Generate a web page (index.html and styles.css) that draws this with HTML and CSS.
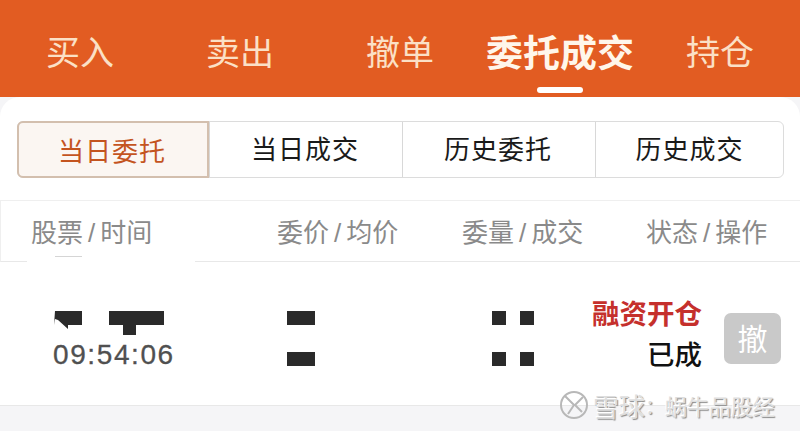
FILE: index.html
```html
<!DOCTYPE html>
<html lang="zh-CN">
<head>
    <meta charset="UTF-8">
    <meta name="viewport" content="width=device-width, initial-scale=1.0">
    <title>委托成交</title>
    <link rel="stylesheet" href="styles.css">
</head>
<body>
    <div class="page">
        <nav class="top-tabs">
            <div class="top-tab">买入</div>
            <div class="top-tab">卖出</div>
            <div class="top-tab">撤单</div>
            <div class="top-tab active">委托成交</div>
            <div class="top-tab">持仓</div>
        </nav>

        <div class="card">
            <div class="segments">
                <div class="segment active">当日委托</div>
                <div class="segment">当日成交</div>
                <div class="segment">历史委托</div>
                <div class="segment">历史成交</div>
            </div>

            <div class="table-head">
                <div class="col-name">股票<i>/</i>时间</div>
                <div class="col-price">委价<i>/</i>均价</div>
                <div class="col-qty">委量<i>/</i>成交</div>
                <div class="col-state">状态<i>/</i>操作</div>
            </div>

            <div class="order-row">
                <div class="col-name">
                    <div class="name-blocks">
                        <svg class="notched" width="28" height="18" viewBox="0 0 28 18">
                            <polygon points="1,0 28,0 28,14 14,14 14,18 4,9 1,8 0,14" fill="#2a2a2a"/>
                        </svg>
                        <span class="block wide"><b></b></span>
                    </div>
                    <div class="time">09:54:06</div>
                </div>
                <div class="col-price stack">
                    <span class="block"></span>
                    <span class="block"></span>
                </div>
                <div class="col-qty stack">
                    <div class="pair"><span class="block small"></span><span class="block small"></span></div>
                    <div class="pair"><span class="block small"></span><span class="block small"></span></div>
                </div>
                <div class="col-state">
                    <div class="order-type">融资开仓</div>
                    <div class="order-status">已成</div>
                </div>
                <button class="cancel-btn">撤</button>
            </div>
        </div>

        <div class="patch"><span></span></div>

        <div class="watermark">
            <svg width="30" height="30" viewBox="0 0 30 30" fill="none" stroke="#b8b8b8" stroke-width="2">
                <circle cx="15" cy="15" r="13"/>
                <path d="M6 6 L15 15 L9 24"/>
                <path d="M24 7 L16 15 L23 22"/>
            </svg>
            <span class="wm-brand">雪球</span><span class="wm-colon">：</span><span class="wm-name">蜗牛品股经</span>
        </div>
    </div>
</body>
</html>
```

FILE: styles.css
```css
body {
    margin: 0;
    background-color: #f5f5f7;
    font-family: "Noto Sans CJK SC", "Liberation Sans", sans-serif;
}
.page {
    position: relative;
    width: 800px;
    height: 431px;
    overflow: hidden;
}
.top-tabs {
    display: grid;
    grid-template-columns: repeat(5, 160px);
    height: 97px;
    background-color: #e25c22;
}
.top-tab {
    position: relative;
    text-align: center;
    font-size: 34px;
    line-height: 102px;
    color: #fbe0c6;
    white-space: nowrap;
}
.top-tab.active {
    font-size: 37px;
    font-weight: 700;
    color: #fff6ea;
}
.top-tab.active::after {
    content: "";
    position: absolute;
    left: 57px;
    top: 87px;
    width: 46px;
    height: 6px;
    border-radius: 3px;
    background-color: #fff;
}
.card {
    height: 309px;
    padding-top: 24px;
    box-sizing: border-box;
    background-color: #fff;
    border-radius: 20px 20px 0 0;
    border-bottom: 1px solid #e8e8e8;
}
.segments {
    display: grid;
    grid-template-columns: 191px 193px 193px 1fr;
    height: 57px;
    margin: 0 16px 0 17px;
    box-sizing: border-box;
    border: 1px solid #dcdcdc;
    border-radius: 6px;
}
.segment {
    padding-right: 2px;
    text-align: center;
    font-size: 26px;
    letter-spacing: 1px;
    line-height: 51px;
    color: #1a1a1a;
    border-left: 1px solid #d8d8d8;
}
.segment:first-child {
    border-left: none;
}
.segment:last-child {
    padding-right: 0;
}
.segment.active {
    margin: -1px 0 -1px -1px;
    line-height: 53px;
    color: #c4541f;
    background-color: #fbf6f2;
    border: 2px solid #d3bfae;
    border-radius: 6px 0 0 6px;
}
.table-head {
    display: flex;
    height: 62px;
    margin-top: 22px;
    padding-bottom: 2px;
    box-sizing: border-box;
    align-items: center;
    font-size: 26px;
    color: #8a8a8a;
    border-top: 1px solid #efefef;
    border-bottom: 1px solid #e8e8e8;
    border-left: 1px solid #efefef;
}
.table-head i {
    font-style: normal;
    font-family: "Liberation Sans", sans-serif;
    margin: 0 5px;
}
.table-head > div {
    white-space: nowrap;
}
.table-head .col-name {
    width: 276px;
    padding-left: 30px;
    box-sizing: border-box;
}
.table-head .col-price {
    width: 185px;
}
.table-head .col-qty {
    width: 184px;
}
.order-row {
    position: relative;
    display: flex;
    height: 143px;
    box-sizing: border-box;
    padding-top: 49px;
}
.block {
    display: block;
    position: relative;
    width: 28px;
    height: 14px;
    background-color: #2a2a2a;
}
.block.small {
    width: 14px;
}
.block.wide {
    width: 55px;
}
.block.wide b {
    position: absolute;
    left: 14px;
    top: 14px;
    width: 13px;
    height: 10px;
    background-color: #2a2a2a;
}
.order-row .col-name {
    width: 287px;
    padding-left: 52px;
    box-sizing: border-box;
}
.name-blocks {
    display: flex;
    gap: 27px;
    height: 14px;
    margin-left: 2px;
}
.notched {
    flex: none;
}
.time {
    margin-top: 10px;
    margin-left: 1px;
    font-family: "Liberation Sans", sans-serif;
    font-size: 28px;
    line-height: 40px;
    letter-spacing: 1.6px;
    color: #505050;
    -webkit-text-stroke: 0.3px #505050;
    white-space: nowrap;
}
.stack {
    display: flex;
    flex-direction: column;
    gap: 27px;
}
.order-row .col-price {
    width: 205px;
}
.order-row .col-qty {
    width: 100px;
}
.pair {
    display: flex;
    gap: 14px;
}
.order-row .col-state {
    width: 110px;
    margin-top: -19px;
    text-align: right;
    font-size: 27.5px;
    line-height: 41px;
}
.order-type {
    font-weight: 700;
    color: #c5302c;
}
.order-status {
    font-weight: 500;
    color: #111;
}
.cancel-btn {
    position: absolute;
    left: 724px;
    top: 51px;
    width: 57px;
    height: 51px;
    padding: 0 0 3px;
    border: none;
    border-radius: 7px;
    background-color: #c9c9c9;
    color: #fff;
    font-family: inherit;
    font-size: 30px;
}
/* cover over the retouched part of the header line */
.patch {
    position: absolute;
    left: 27px;
    top: 259px;
    width: 168px;
    height: 5px;
    background-color: #fff;
}
.patch span {
    position: absolute;
    left: 28px;
    top: -3px;
    width: 27px;
    height: 1px;
    background-color: #d5d5d5;
}
.watermark {
    position: absolute;
    left: 559px;
    top: 387px;
    display: flex;
    align-items: center;
    height: 36px;
    color: #dedede;
    text-shadow: -1px -1px 0 #fff, 1px 1px 1px #8a8a8a;
    white-space: nowrap;
}
.watermark svg {
    margin-right: 4px;
}
.wm-brand {
    font-size: 26px;
}
.wm-colon {
    font-size: 20px;
    width: 20px;
}
.wm-name {
    font-size: 22px;
}
```
